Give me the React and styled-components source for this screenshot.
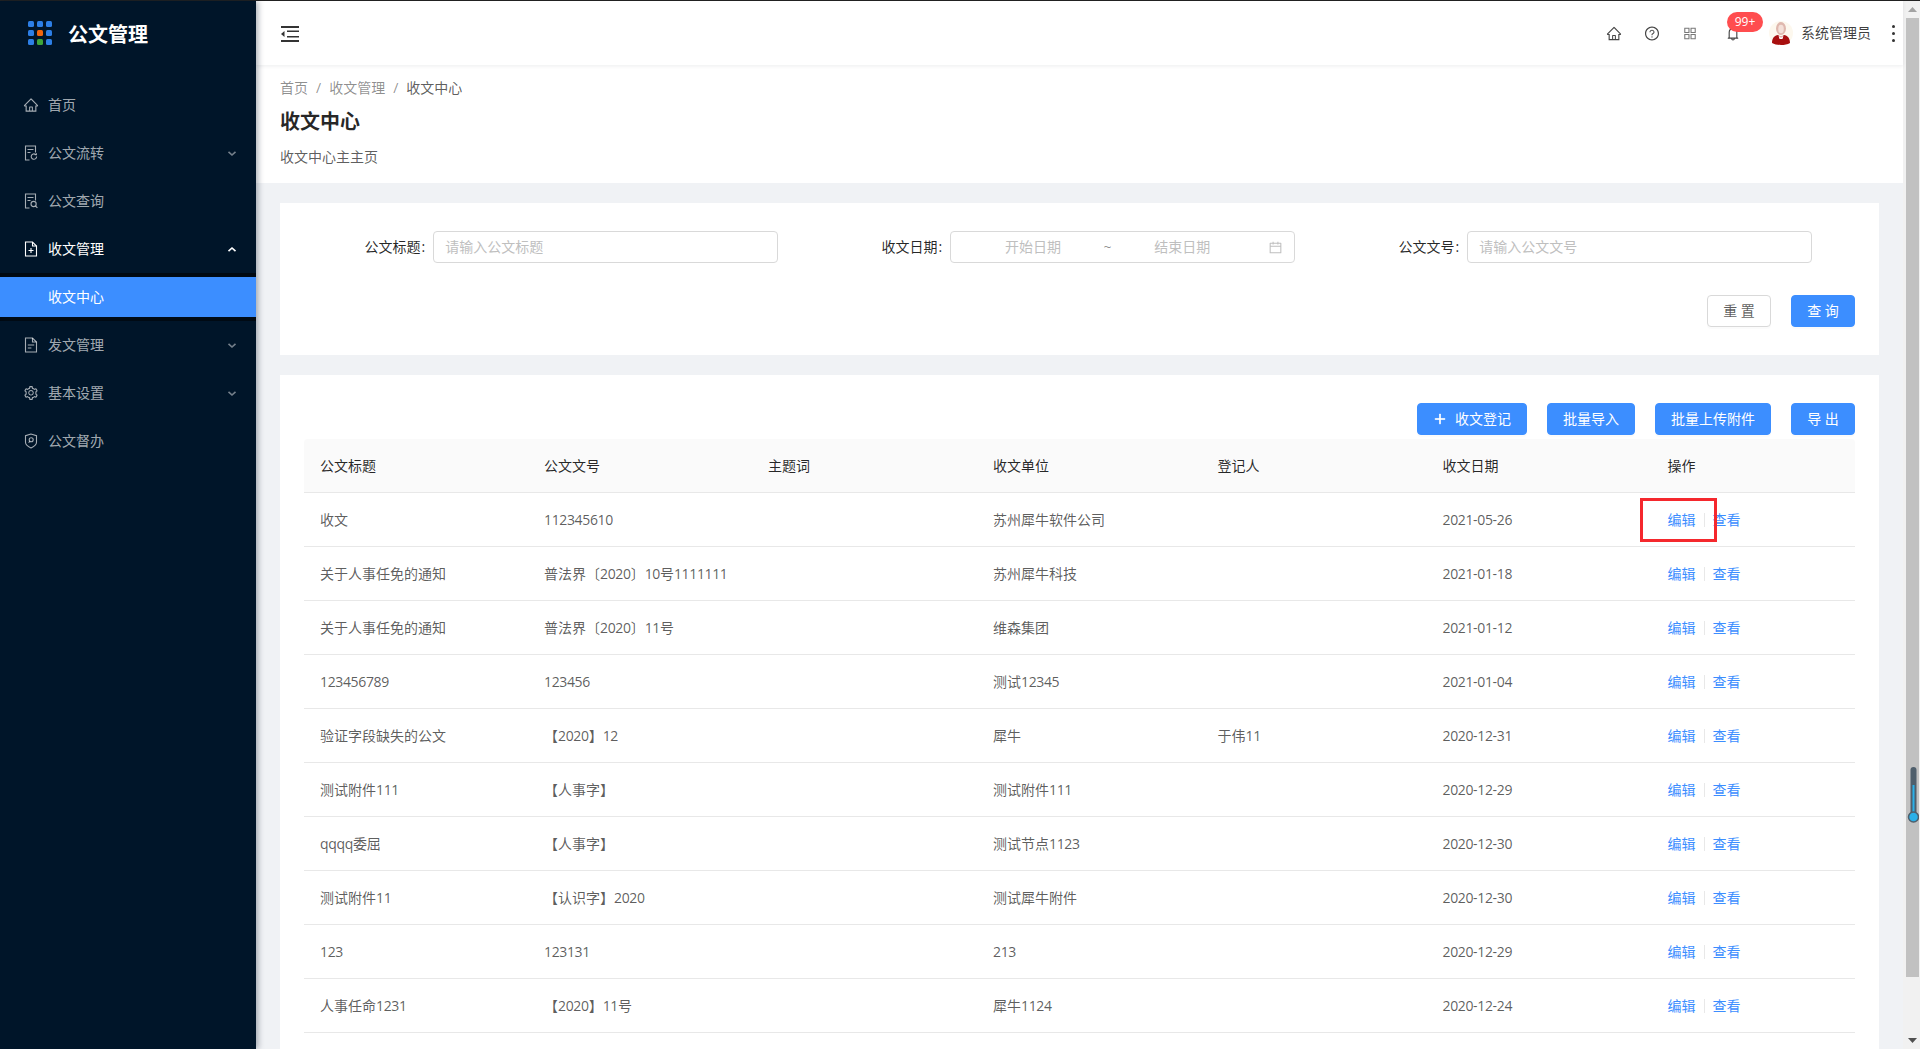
import styled, { createGlobalStyle } from "styled-components";
import {
  AiOutlineHome,
  AiOutlineSetting,
  AiOutlineQuestionCircle,
  AiOutlineAppstore,
  AiOutlineBell,
  AiOutlineCalendar,
  AiOutlinePlus,
} from "react-icons/ai";

const FONT = `"Open Sans", "Noto Sans CJK SC", sans-serif`;
const BLUE = "#3c8eff";

const GlobalStyle = createGlobalStyle`
  html, body {
    margin: 0;
    height: 100%;
    overflow: hidden;
    background: #f0f2f5;
  }
  body {
    font-family: ${FONT};
    font-size: 14px;
    line-height: 22px;
    color: rgba(0, 0, 0, 0.65);
    text-spacing-trim: space-all;
  }
  * {
    box-sizing: border-box;
  }
`;

const Page = styled.div`
  height: 1049px;
  display: flex;
  flex-direction: column;
  overflow: hidden;
`;

const TopEdge = styled.div`
  height: 1px;
  flex: none;
  background: #222;
`;

const Shell = styled.div`
  flex: 1;
  display: flex;
  min-height: 0;
`;

/* sidebar */
const Sider = styled.aside`
  width: 256px;
  flex: none;
  background: #001529;
  box-shadow: 2px 0 6px rgba(0, 21, 41, 0.35);
  position: relative;
  z-index: 2;
`;

const Logo = styled.div`
  height: 64px;
  display: flex;
  align-items: center;
  gap: 16px;
  padding-left: 28px;
`;

const LogoDots = styled.div`
  display: grid;
  grid-template-columns: repeat(3, 6px);
  grid-auto-rows: 6px;
  gap: 3px;
`;

const Dot = styled.span`
  border-radius: 1.5px;
  background: ${(p) => p.$color || "#2d7fe6"};
`;

const LogoTitle = styled.h1`
  margin: 4px 0 0;
  font-size: 20px;
  line-height: 28px;
  font-weight: 700;
  color: #fff;
`;

const Menu = styled.nav`
  padding-top: 16px;
  display: flex;
  flex-direction: column;
`;

const MenuItem = styled.div`
  height: 40px;
  margin: 4px 0;
  padding-left: 24px;
  padding-right: 19px;
  display: flex;
  align-items: center;
  color: ${(p) => (p.$open ? "#fff" : "rgba(255, 255, 255, 0.65)")};
  svg.menu-icon {
    width: 14px;
    height: 16px;
    margin-right: 10px;
    flex: none;
  }
  svg.menu-icon-ai {
    width: 16px;
    height: 16px;
    margin: 0 9px 0 -1px;
    flex: none;
  }
`;

const MenuLabel = styled.span`
  flex: 1;
`;

const SubMenu = styled.div`
  background: #000c17;
  padding: 4px 0;
  box-shadow: inset 0 2px 8px rgba(0, 0, 0, 0.45);
`;

const SubItem = styled.div`
  height: 40px;
  padding-left: 48px;
  display: flex;
  align-items: center;
  color: #fff;
  background: ${BLUE};
`;

const Chevron = ({ up }) => (
  <svg width="10" height="7" viewBox="0 0 10 7" fill="none">
    <path
      d={up ? "M1.5 5.2 5 2l3.5 3.2" : "M1.5 1.8 5 5l3.5-3.2"}
      stroke="currentColor"
      strokeOpacity={up ? 1 : 0.7}
      strokeWidth="1.6"
    />
  </svg>
);

const FileIcon = ({ children }) => (
  <svg className="menu-icon" viewBox="0 0 14 16" fill="none" stroke="currentColor" strokeWidth="1.1">
    {children}
  </svg>
);

const FileFlow = () => (
  <FileIcon>
    <path d="M5.5 15H1.5V1h10v6.5" />
    <path d="M3.5 4.5h6M3.5 7.5h3" />
    <path d="M12.6 11.5a2.7 2.7 0 1 1-1-2" />
    <path d="M12.4 8.2v1.6h-1.6" />
  </FileIcon>
);

const FileSearch = () => (
  <FileIcon>
    <path d="M5.5 15H1.5V1h10v6.5" />
    <path d="M3.5 4.5h6M3.5 7.5h3" />
    <circle cx="9.6" cy="11" r="2.6" />
    <path d="m11.5 13 1.9 1.9" />
  </FileIcon>
);

const FilePlus = () => (
  <FileIcon>
    <path d="M8.5 1h-7v14h11V5z" />
    <path d="M8.5 1v4h4M7 7v5M4.5 9.5h5" />
  </FileIcon>
);

const FileDoc = () => (
  <FileIcon>
    <path d="M8.5 1h-7v14h11V5z" />
    <path d="M8.5 1v4h4M3.8 8h6.4M3.8 11h3.6" />
  </FileIcon>
);

const ShieldKey = () => (
  <FileIcon>
    <path d="M7 1 1.5 2.6v6.6c0 2.6 3 4.6 5.5 5.8 2.5-1.2 5.5-3.2 5.5-5.8V2.6z" />
    <circle cx="7.2" cy="6.8" r="2" />
    <path d="M5.8 8.3 4.6 9.6" />
  </FileIcon>
);

const FoldIcon = () => (
  <svg width="18" height="16" viewBox="0 0 18 16" fill="#333">
    <rect width="18" height="2" />
    <rect y="14" width="18" height="2" />
    <rect x="6" y="4.500" width="12" height="1.500" />
    <rect x="6" y="10" width="12" height="1.500" />
    <path d="M0 8 3.500 5v6z" />
  </svg>
);

/* main column */
const Main = styled.main`
  flex: 1;
  min-width: 0;
  display: flex;
  flex-direction: column;
`;

const Header = styled.header`
  height: 64px;
  flex: none;
  background: #fff;
  box-shadow: 0 1px 4px rgba(0, 21, 41, 0.08);
  position: relative;
  z-index: 1;
  display: flex;
  align-items: center;
  justify-content: space-between;
  padding: 0 7px 0 25px;
  color: rgba(0, 0, 0, 0.75);
`;

const Trigger = styled.span`
  display: flex;
  margin-top: 2px;
`;

const Tools = styled.div`
  display: flex;
  align-items: center;
`;

const ToolIcon = styled.span`
  width: 16px;
  height: 16px;
  margin-right: ${(p) => p.$gap}px;
  font-size: ${(p) => p.$size || 17}px;
  display: flex;
  align-items: center;
  justify-content: center;
  position: relative;
  color: ${(p) => p.$color || "#444"};
`;

const Badge = styled.span`
  position: absolute;
  left: 2px;
  top: -13px;
  width: 36px;
  height: 20px;
  border-radius: 10px;
  background: #ff4d4f;
  color: #fff;
  font-size: 12px;
  line-height: 20px;
  text-align: center;
`;

const UserName = styled.span`
  margin-left: 8px;
  margin-right: 21px;
`;

const MoreDots = styled.span`
  display: flex;
  flex-direction: column;
  gap: 4px;
  width: 4px;
  i {
    width: 3px;
    height: 3px;
    border-radius: 50%;
    background: #333;
  }
`;

const PageHead = styled.section`
  background: #fff;
  padding: 12px 24px 15px;
`;

const Crumbs = styled.div`
  color: rgba(0, 0, 0, 0.45);
  display: flex;
  gap: 8px;
  span:last-child {
    color: rgba(0, 0, 0, 0.65);
  }
`;

const PageTitle = styled.h2`
  margin: 7px 0 8px;
  font-size: 20px;
  line-height: 32px;
  font-weight: 700;
  color: rgba(0, 0, 0, 0.85);
`;

const PageDesc = styled.p`
  margin: 0;
`;

const Content = styled.div`
  flex: 1;
  padding: 20px 24px 0;
  display: flex;
  flex-direction: column;
  gap: 20px;
  min-height: 0;
`;

const Card = styled.section`
  background: #fff;
  padding: 28px 24px ${(p) => (p.$fill ? 0 : "28px")};
  flex: ${(p) => (p.$fill ? 1 : "none")};
`;

const FormRow = styled.div`
  display: grid;
  grid-template-columns: repeat(3, 1fr);
`;

const FormItem = styled.div`
  display: grid;
  grid-template-columns: 25% 66.67%;
  align-items: center;
`;

const FieldLabel = styled.label`
  text-align: right;
  padding-right: 8px;
  color: rgba(0, 0, 0, 0.85);
`;

const Colon = styled.span`
  margin-left: 1px;
`;

const Input = styled.input`
  height: 32px;
  width: 100%;
  padding: 0 11px 2px;
  border: 1px solid #d9d9d9;
  border-radius: 4px;
  background: #fff;
  font: inherit;
  outline: none;
  &::placeholder {
    color: #bfbfbf;
  }
`;

const RangeBox = styled.div`
  height: 32px;
  padding: 0 11px;
  border: 1px solid #d9d9d9;
  border-radius: 4px;
  display: flex;
  align-items: center;
  color: #bfbfbf;
  svg {
    margin-left: 15px;
    flex: none;
  }
`;

const RangePart = styled.span`
  flex: 1;
  text-align: center;
`;

const RangeSep = styled.span`
  width: 8px;
  text-align: center;
  color: rgba(0, 0, 0, 0.45);
`;

const Actions = styled.div`
  margin-top: ${(p) => p.$top}px;
  display: flex;
  justify-content: flex-end;
  gap: 20px;
`;

const Button = styled.button`
  height: 32px;
  min-width: 64px;
  padding: 0 15px;
  display: inline-flex;
  align-items: center;
  justify-content: center;
  gap: 8px;
  border-radius: 4px;
  font: inherit;
  border: 1px solid ${(p) => (p.$ghost ? "#d9d9d9" : BLUE)};
  background: ${(p) => (p.$ghost ? "#fff" : BLUE)};
  color: ${(p) => (p.$ghost ? "rgba(0, 0, 0, 0.65)" : "#fff")};
  box-shadow: 0 2px 0 rgba(0, 0, 0, 0.015);
  svg {
    stroke: currentColor;
    stroke-width: 50;
  }
`;

const Table = styled.div`
  margin-top: 4px;
`;

const Row = styled.div`
  height: 54px;
  display: grid;
  grid-template-columns: 224px 224px 225px 224.5px 225px 225px 1fr;
  align-items: center;
  border-bottom: 1px solid #e8e8e8;
  background: ${(p) => (p.$head ? "#fafafa" : "#fff")};
  border-radius: ${(p) => (p.$head ? "4px 4px 0 0" : "0")};
  color: ${(p) => (p.$head ? "rgba(0, 0, 0, 0.85)" : "rgba(0, 0, 0, 0.65)")};
`;

const Cell = styled.div`
  padding: 0 16px;
  white-space: nowrap;
`;

/* digits of the reference are narrower than Open Sans */
const Latin = styled.span`
  letter-spacing: -0.35px;
`;

const OpCell = styled(Cell)`
  display: flex;
  align-items: center;
  position: relative;
`;

const Link = styled.a`
  color: ${BLUE};
`;

const VLine = styled.i`
  width: 1px;
  height: 14px;
  margin: 0 8px;
  background: #e8e8e8;
`;

const Highlight = styled.span`
  position: absolute;
  left: -12px;
  top: -11px;
  width: 77px;
  height: 44px;
  border: 3px solid #f5282d;
`;

/* fake browser scrollbar, it is part of the screenshot */
const ScrollBar = styled.div`
  width: 17px;
  flex: none;
  background: #f1f1f1;
  position: relative;
  display: flex;
  flex-direction: column;
  align-items: center;
  padding-left: 2px;
`;

const ScrollArrow = styled.span`
  height: 17px;
  flex: none;
  display: flex;
  align-items: center;
  justify-content: center;
`;

const ScrollThumb = styled.div`
  width: 13px;
  height: 959px;
  background: #c1c1c1;
  flex: none;
`;

const ScrollRest = styled.div`
  flex: 1;
`;

const Thermo = styled.svg`
  position: absolute;
  left: 2px;
  top: 765px;
`;

const COLUMNS = ["公文标题", "公文文号", "主题词", "收文单位", "登记人", "收文日期"];

const ROWS = [
  ["收文", "112345610", "", "苏州犀牛软件公司", "", "2021-05-26"],
  ["关于人事任免的通知", "普法界〔2020〕10号1111111", "", "苏州犀牛科技", "", "2021-01-18"],
  ["关于人事任免的通知", "普法界〔2020〕11号", "", "维森集团", "", "2021-01-12"],
  ["123456789", "123456", "", "测试12345", "", "2021-01-04"],
  ["验证字段缺失的公文", "【2020】12", "", "犀牛", "于伟11", "2020-12-31"],
  ["测试附件111", "【人事字】", "", "测试附件111", "", "2020-12-29"],
  ["qqqq委屈", "【人事字】", "", "测试节点1123", "", "2020-12-30"],
  ["测试附件11", "【认识字】2020", "", "测试犀牛附件", "", "2020-12-30"],
  ["123", "123131", "", "213", "", "2020-12-29"],
  ["人事任命1231", "【2020】11号", "", "犀牛1124", "", "2020-12-24"],
];

const DOTS = [null, null, null, null, "#f0650e", null, null, "#3ea53a", null];

const splitLatin = (text) =>
  text.split(/([\x21-\x7e]+)/).map((part, i) => (i % 2 ? <Latin key={i}>{part}</Latin> : part));

const Avatar = () => (
  <svg width="24" height="24" viewBox="0 0 24 24">
    <circle cx="12" cy="12" r="12" fill="#fdf8ee" />
    <ellipse cx="12" cy="7.500" rx="5" ry="6.500" fill="#dfb8ae" />
    <ellipse cx="12" cy="8" rx="2.800" ry="4.200" fill="#f4e0d8" />
    <path d="M3 22c0-5 2.500-7.500 6-8l3 2 3-2c3.500.5 6 3 6 8-2.500 1.500-5.500 2-9 2s-6.500-.5-9-2z" fill="#a80f0f" />
    <path d="m9.500 14.500 2.500 2 2.500-2-1 3.500h-3z" fill="#fff" />
  </svg>
);

export default function App() {
  return (
    <Page>
      <GlobalStyle />
      <TopEdge />
      <Shell>
        <Sider>
          <Logo>
            <LogoDots>
              {DOTS.map((c, i) => (
                <Dot key={i} $color={c} />
              ))}
            </LogoDots>
            <LogoTitle>公文管理</LogoTitle>
          </Logo>
          <Menu>
            <MenuItem>
              <AiOutlineHome className="menu-icon-ai" />
              <MenuLabel>首页</MenuLabel>
            </MenuItem>
            <MenuItem>
              <FileFlow />
              <MenuLabel>公文流转</MenuLabel>
              <Chevron />
            </MenuItem>
            <MenuItem>
              <FileSearch />
              <MenuLabel>公文查询</MenuLabel>
            </MenuItem>
            <MenuItem $open>
              <FilePlus />
              <MenuLabel>收文管理</MenuLabel>
              <Chevron up />
            </MenuItem>
            <SubMenu>
              <SubItem>收文中心</SubItem>
            </SubMenu>
            <MenuItem>
              <FileDoc />
              <MenuLabel>发文管理</MenuLabel>
              <Chevron />
            </MenuItem>
            <MenuItem>
              <AiOutlineSetting className="menu-icon-ai" />
              <MenuLabel>基本设置</MenuLabel>
              <Chevron />
            </MenuItem>
            <MenuItem>
              <ShieldKey />
              <MenuLabel>公文督办</MenuLabel>
            </MenuItem>
          </Menu>
        </Sider>

        <Main>
          <Header>
            <Trigger>
              <FoldIcon />
            </Trigger>
            <Tools>
              <ToolIcon $gap={22}>
                <AiOutlineHome />
              </ToolIcon>
              <ToolIcon $gap={22}>
                <AiOutlineQuestionCircle />
              </ToolIcon>
              <ToolIcon $gap={27} $color="#777">
                <AiOutlineAppstore />
              </ToolIcon>
              <ToolIcon $gap={28} $size={19}>
                <AiOutlineBell />
                <Badge>99+</Badge>
              </ToolIcon>
              <Avatar />
              <UserName>系统管理员</UserName>
              <MoreDots>
                <i />
                <i />
                <i />
              </MoreDots>
            </Tools>
          </Header>

          <PageHead>
            <Crumbs>
              <span>首页</span>
              <span>/</span>
              <span>收文管理</span>
              <span>/</span>
              <span>收文中心</span>
            </Crumbs>
            <PageTitle>收文中心</PageTitle>
            <PageDesc>收文中心主主页</PageDesc>
          </PageHead>

          <Content>
            <Card>
              <FormRow>
                <FormItem>
                  <FieldLabel>
                    公文标题<Colon>:</Colon>
                  </FieldLabel>
                  <Input placeholder="请输入公文标题" />
                </FormItem>
                <FormItem>
                  <FieldLabel>
                    收文日期<Colon>:</Colon>
                  </FieldLabel>
                  <RangeBox>
                    <RangePart>开始日期</RangePart>
                    <RangeSep>~</RangeSep>
                    <RangePart>结束日期</RangePart>
                    <AiOutlineCalendar size={15} />
                  </RangeBox>
                </FormItem>
                <FormItem>
                  <FieldLabel>
                    公文文号<Colon>:</Colon>
                  </FieldLabel>
                  <Input placeholder="请输入公文文号" />
                </FormItem>
              </FormRow>
              <Actions $top={32}>
                <Button $ghost>重 置</Button>
                <Button>查 询</Button>
              </Actions>
            </Card>

            <Card $fill>
              <Actions $top={0}>
                <Button>
                  <AiOutlinePlus size={14} />
                  收文登记
                </Button>
                <Button>批量导入</Button>
                <Button>批量上传附件</Button>
                <Button>导 出</Button>
              </Actions>
              <Table>
                <Row $head>
                  {COLUMNS.map((c) => (
                    <Cell key={c}>{c}</Cell>
                  ))}
                  <Cell>操作</Cell>
                </Row>
                {ROWS.map((row, i) => (
                  <Row key={i}>
                    {row.map((v, j) => (
                      <Cell key={j}>{splitLatin(v)}</Cell>
                    ))}
                    <OpCell>
                      {i === 0 && <Highlight />}
                      <Link>编辑</Link>
                      <VLine />
                      <Link>查看</Link>
                    </OpCell>
                  </Row>
                ))}
              </Table>
            </Card>
          </Content>
        </Main>

        <ScrollBar>
          <ScrollArrow>
            <svg width="9" height="5" viewBox="0 0 9 5">
              <path d="M4.500 0 9 5H0z" fill="#a3a3a3" />
            </svg>
          </ScrollArrow>
          <ScrollThumb />
          <ScrollRest />
          <ScrollArrow>
            <svg width="9" height="5" viewBox="0 0 9 5">
              <path d="M0 0h9L4.500 5z" fill="#505050" />
            </svg>
          </ScrollArrow>
          <Thermo width="14" height="60" viewBox="0 0 14 60">
            <rect x="5.500" y="1" width="6" height="50" rx="3" fill="#4f5f6c" />
            <rect x="7.500" y="19" width="2" height="34" fill="#2bb0e8" />
            <circle cx="8.500" cy="51" r="5" fill="#2bb0e8" stroke="#4f5f6c" strokeWidth="1.500" />
          </Thermo>
        </ScrollBar>
      </Shell>
    </Page>
  );
}
